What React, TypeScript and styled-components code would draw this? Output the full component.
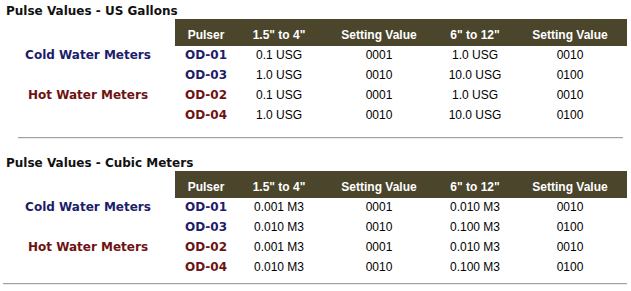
import { FC } from "react";
import styled, { createGlobalStyle, css } from "styled-components";

const GlobalStyle = createGlobalStyle`
  body {
    margin: 0;
    background: #ffffff;
  }
`;

type Group = "cold" | "hot";

type PulseRow = {
	label?: string;
	group: Group;
	pulser: string;
	small: string;
	smallSetting: string;
	large: string;
	largeSetting: string;
};

type Section = {
	title: string;
	rows: PulseRow[];
};

const sections: Section[] = [
	{
		title: "Pulse Values - US Gallons",
		rows: [
			{ label: "Cold Water Meters", group: "cold", pulser: "OD-01", small: "0.1 USG", smallSetting: "0001", large: "1.0 USG", largeSetting: "0010" },
			{ group: "cold", pulser: "OD-03", small: "1.0 USG", smallSetting: "0010", large: "10.0 USG", largeSetting: "0100" },
			{ label: "Hot Water Meters", group: "hot", pulser: "OD-02", small: "0.1 USG", smallSetting: "0001", large: "1.0 USG", largeSetting: "0010" },
			{ group: "hot", pulser: "OD-04", small: "1.0 USG", smallSetting: "0010", large: "10.0 USG", largeSetting: "0100" },
		],
	},
	{
		title: "Pulse Values - Cubic Meters",
		rows: [
			{ label: "Cold Water Meters", group: "cold", pulser: "OD-01", small: "0.001 M3", smallSetting: "0001", large: "0.010 M3", largeSetting: "0010" },
			{ group: "cold", pulser: "OD-03", small: "0.010 M3", smallSetting: "0010", large: "0.100 M3", largeSetting: "0100" },
			{ label: "Hot Water Meters", group: "hot", pulser: "OD-02", small: "0.001 M3", smallSetting: "0001", large: "0.010 M3", largeSetting: "0010" },
			{ group: "hot", pulser: "OD-04", small: "0.010 M3", smallSetting: "0010", large: "0.100 M3", largeSetting: "0100" },
		],
	},
];

const headings = ["Pulser", '1.5" to 4"', "Setting Value", '6" to 12"', "Setting Value"];

const App: FC = () => {
	return (
		<>
			<GlobalStyle />
			<Page>
				{sections.map((section, i) => (
					<Block key={section.title} $first={i === 0}>
						<Title>{section.title}</Title>
						<Table>
							<Corner />
							{headings.map((h, j) => (
								<HeadCell key={j}>{h}</HeadCell>
							))}
							{section.rows.map((row) => (
								<Row key={row.pulser}>
									<GroupLabel $group={row.group}>{row.label ?? ""}</GroupLabel>
									<Pulser $group={row.group}>{row.pulser}</Pulser>
									<Value>{row.small}</Value>
									<Value>{row.smallSetting}</Value>
									<Value>{row.large}</Value>
									<Value>{row.largeSetting}</Value>
								</Row>
							))}
						</Table>
						<Rule $inset={i === 0} />
					</Block>
				))}
			</Page>
		</>
	);
};

const groupColor = {
	cold: "#1d1d6b",
	hot: "#6e1212",
};

const Page = styled.div`
    display: flex;
    flex-direction: column;
    padding: 4px 0 0 1px;
    width: 630px;
`;

const Block = styled.section<{ $first?: boolean }>`
    display: flex;
    flex-direction: column;
    margin-top: ${(p) => (p.$first ? "0" : "17px")};
`;

const Title = styled.h2`
    margin: 0 0 1px 5px;
    font-family: 'DejaVu Sans', 'Verdana', sans-serif;
    font-weight: 700;
    font-size: 12px;
    line-height: 14px;
    color: #111111;
`;

const Table = styled.div`
    display: grid;
    grid-template-columns: 174px 62px 84px 116px 76px 114px;
    width: 626px;
`;

const Row = styled.div`
    display: contents;
`;

const Corner = styled.div`
    background: #ffffff;
`;

const HeadCell = styled.div`
    padding: 9px 0 4px;
    background: #4a452b;
    font-family: 'Liberation Sans', Arial, sans-serif;
    font-weight: 700;
    font-size: 12px;
    line-height: 14px;
    color: #ffffff;
    text-align: center;
    white-space: nowrap;
`;

const cellBase = css`
    height: 20px;
    line-height: 19px;
    text-align: center;
    white-space: nowrap;
`;

const GroupLabel = styled.div<{ $group: Group }>`
    ${cellBase}
    font-family: 'DejaVu Sans', 'Verdana', sans-serif;
    font-weight: 700;
    font-size: 12px;
    color: ${(p) => groupColor[p.$group]};
`;

const Pulser = styled.div<{ $group: Group }>`
    ${cellBase}
    font-family: 'DejaVu Sans', 'Verdana', sans-serif;
    font-weight: 700;
    font-size: 12px;
    color: ${(p) => groupColor[p.$group]};
`;

const Value = styled.div`
    ${cellBase}
    font-family: 'Liberation Sans', Arial, sans-serif;
    font-size: 12px;
    color: #000000;
`;

const Rule = styled.hr<{ $inset?: boolean }>`
    height: 0;
    border: none;
    border-top: 1px solid #a0a0a0;
    border-bottom: 1px solid #ececec;
    ${(p) =>
		p.$inset
			? css`
            margin: 11px 0 0 17px;
            width: 605px;
        `
			: css`
            margin: 5px 0 0 2px;
            width: 624px;
        `}
`;

export default App;
